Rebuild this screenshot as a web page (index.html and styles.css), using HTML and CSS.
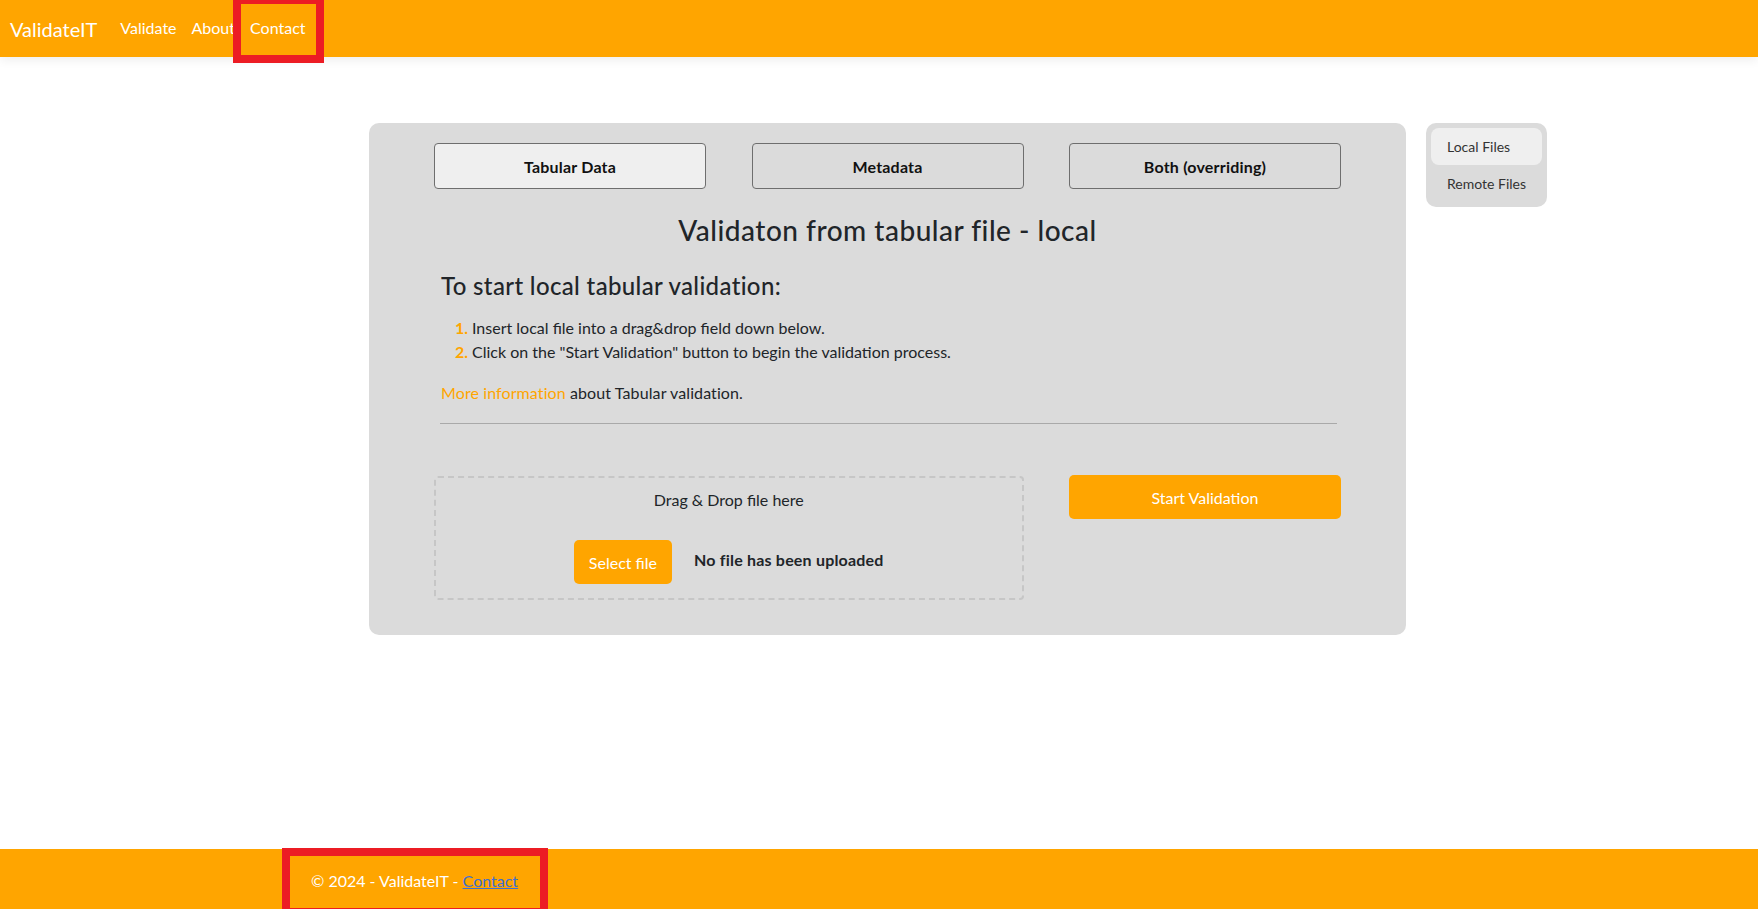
FILE: index.html
```html
<!DOCTYPE html>
<html lang="en">
<head>
<meta charset="utf-8">
<title>ValidateIT</title>
<link rel="stylesheet" href="styles.css">
</head>
<body>
<header class="navbar">
  <a class="brand" href="#">ValidateIT</a>
  <nav class="nav">
    <a class="nav-link" href="#">Validate</a>
    <a class="nav-link" href="#">About</a>
    <a class="nav-link marked" href="#">Contact</a>
  </nav>
</header>

<main class="main">
  <section class="card">
    <div class="grid3 tabs">
      <button class="tab active">Tabular Data</button>
      <button class="tab">Metadata</button>
      <button class="tab">Both (overriding)</button>
    </div>
    <h3 class="title">Validaton from tabular file - local</h3>
    <div class="info">
      <h4 class="subtitle">To start local tabular validation:</h4>
      <ol class="steps">
        <li>Insert local file into a drag&amp;drop field down below.</li>
        <li>Click on the "Start Validation" button to begin the validation process.</li>
      </ol>
      <p class="more"><a href="#" class="more-link">More information</a> about Tabular validation.</p>
      <hr class="divider">
    </div>
    <div class="grid3 actions">
      <div class="dropzone">
        <div class="drop-text">Drag &amp; Drop file here</div>
        <div class="drop-row">
          <button class="btn-orange select">Select file</button>
          <span class="no-file">No file has been uploaded</span>
        </div>
      </div>
      <div class="start-col">
        <button class="btn-orange start">Start Validation</button>
      </div>
    </div>
  </section>
  <aside class="side">
    <a class="side-item active" href="#">Local Files</a>
    <a class="side-item" href="#">Remote Files</a>
  </aside>
</main>

<footer class="footer">
  <span class="foot-text marked-foot">© 2024 - ValidateIT - <a href="#" class="foot-link">Contact</a></span>
</footer>
</body>
</html>
```

FILE: styles.css
```css
* { box-sizing: border-box; }
html, body { margin: 0; padding: 0; }
body {
  font-family: Lato, "Open Sans", sans-serif;
  font-size: 16px;
  line-height: 1.5;
  color: #212529;
  background: #fff;
  min-height: 100vh;
  display: flex;
  flex-direction: column;
  overflow: hidden;
}
a { text-decoration: none; }

.navbar {
  height: 57px;
  background: #ffa500;
  display: flex;
  align-items: stretch;
  padding-left: 10px;
  box-shadow: 0 3px 10px rgba(0,0,0,0.07);
  position: relative;
  z-index: 2;
}
.brand {
  color: #fff;
  font-size: 20px;
  display: flex;
  align-items: center;
  margin-right: 15px;
}
.nav { display: flex; align-items: stretch; }
.nav-link {
  color: #fff;
  font-size: 16px;
  display: flex;
  align-items: center;
  padding: 0 8px 1px;
  position: relative;
}
.nav-link + .nav-link { margin-left: -1px; }
.marked::after {
  content: "";
  position: absolute;
  left: -9px;
  right: -10px;
  top: -4px;
  bottom: -6px;
  border: 8px solid #ec1c24;
}

.main {
  display: flex;
  align-items: flex-start;
  gap: 20px;
  padding: 66px 0 0 369px;
  flex: 1;
}
.card {
  width: 1037px;
  background: #dbdbdb;
  border-radius: 10px;
  padding: 20px 0 35px;
}
.grid3 {
  display: grid;
  grid-template-columns: 272px 272px 272px;
  justify-content: space-between;
  padding: 0 65px;
}
.tab {
  height: 46px;
  border: 1px solid #6e6e6e;
  border-radius: 4px;
  background: #dbdbdb;
  font-family: inherit;
  font-size: 16px;
  font-weight: 700;
  letter-spacing: 0.2px;
  color: #111;
}
.tab.active { background: #efefef; }

.title {
  margin: 25px 0 0;
  text-align: center;
  font-size: 28px;
  font-weight: 500;
  line-height: 1.2;
  letter-spacing: 0.5px;
}
.info { padding: 0 69px 0 72px; }
.subtitle {
  margin: 24px 0 0;
  font-size: 24px;
  font-weight: 500;
  line-height: 1.2;
  letter-spacing: 0.35px;
}
.steps {
  margin: 16px 0 0;
  padding-left: 31px;
}
.steps li::marker { color: #ffa500; font-weight: 700; }
.more { margin: 17px 0 0; letter-spacing: 0.1px; }
.more-link { color: #ffa500; }
.divider {
  margin: 18px 0 0 -1px;
  border: 0;
  border-top: 1px solid #a9a9a9;
}

.actions { margin-top: 52px; align-items: start; }
.dropzone {
  grid-column: span 2;
  height: 124px;
  border: 2px dashed #c6c6c6;
  border-radius: 4px;
  padding-top: 10px;
  text-align: center;
}
.drop-text { line-height: 24px; }
.drop-row {
  margin-top: 28px;
  display: flex;
  justify-content: center;
  align-items: center;
  gap: 22px;
}
.btn-orange {
  background: #ffa500;
  color: #fff;
  border: 0;
  border-radius: 5px;
  font-family: inherit;
  font-size: 16px;
  height: 44px;
}
.select { padding: 0 15px; }
.no-file { font-weight: 700; margin-top: -5px; letter-spacing: 0.2px; }
.start-col { margin-top: -1px; }
.start { width: 100%; }

.side {
  width: 121px;
  background: #dbdbdb;
  border-radius: 10px;
  padding: 5px;
  display: flex;
  flex-direction: column;
}
.side-item {
  font-size: 14px;
  color: #333;
  height: 37px;
  padding-left: 16px;
  display: flex;
  align-items: center;
  border-radius: 8px;
}
.side-item.active { background: #efefef; }

.footer {
  height: 60px;
  background: #ffa500;
  color: #fff;
  padding: 20px 0 0 311px;
}
.foot-text { position: relative; display: inline-block; line-height: 24px; }
.foot-link { color: #3f6fd0; text-decoration: underline; }
.marked-foot::after {
  content: "";
  position: absolute;
  left: -29px;
  right: -30px;
  top: -21px;
  bottom: -23px;
  border: 8px solid #ec1c24;
}
```
